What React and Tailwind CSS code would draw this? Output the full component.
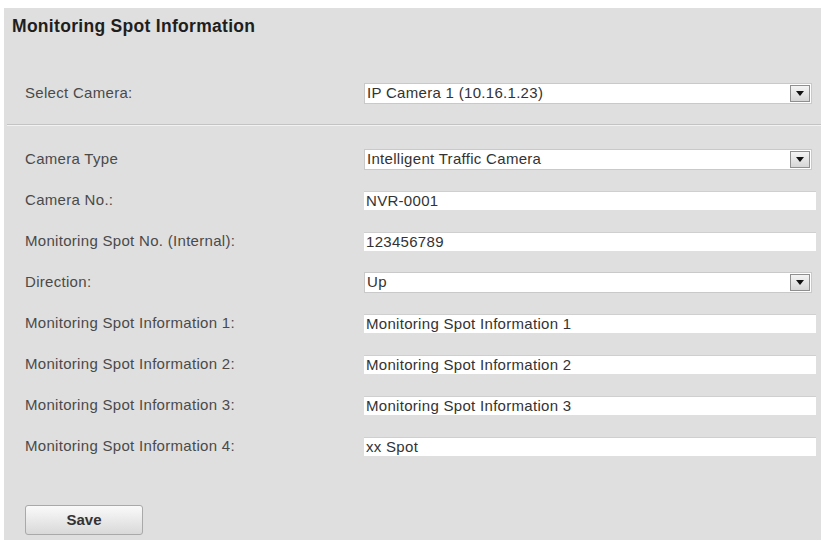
import React from "react";

const font = { fontFamily: '"Liberation Sans", Arial, sans-serif' };

function Select({ value }) {
  return (
    <div className="flex h-[21px] w-[448px] items-stretch border border-[#c9c9c9] bg-white">
      <div className="flex flex-1 items-center pl-[2px] text-[15px] tracking-[0.3px] text-[#333]">{value}</div>
      <div className="m-[1px] flex w-[20px] items-center justify-center border border-[#8f8f8f] bg-gradient-to-b from-[#f4f4f4] to-[#d6d6d6]">
        <svg width="8" height="5" viewBox="0 0 8 5"><path d="M0 0 H8 L4 5 Z" fill="#111" /></svg>
      </div>
    </div>
  );
}

function Input({ value }) {
  return (
    <div className="flex h-[19px] w-[452px] items-center border-t border-[#cfcfcf] bg-white pl-[2px] text-[15px] tracking-[0.3px] text-[#333]">
      {value}
    </div>
  );
}

function Row({ label, children }) {
  return (
    <div className="flex h-[41px] items-center">
      <div className="w-[360px] shrink-0 pl-[21px] text-[15px] tracking-[0.3px] text-[#4a4a4a]">{label}</div>
      {children}
    </div>
  );
}

export default function App() {
  return (
    <div style={font} className="h-[540px] w-[821px] overflow-hidden bg-white pl-[4px] pt-[8px]">
      <div className="flex h-full flex-col bg-[#dfdfdf]">
        <div className="pl-[8px] pt-[8px] text-[17.5px] font-bold leading-[20px] tracking-[0.3px] text-[#1e1e1e]">
          Monitoring Spot Information
        </div>
        <div className="mt-[37px]">
          <Row label="Select Camera:">
            <Select value="IP Camera 1 (10.16.1.23)" />
          </Row>
        </div>
        <div className="ml-[3px] mt-[10px] h-[2px] border-t border-[#c3c3c3] border-b border-b-[#f2f2f2]" />
        <div className="mt-[13px] flex flex-col">
          <Row label="Camera Type">
            <Select value="Intelligent Traffic Camera" />
          </Row>
          <Row label="Camera No.:">
            <Input value="NVR-0001" />
          </Row>
          <Row label="Monitoring Spot No. (Internal):">
            <Input value="123456789" />
          </Row>
          <Row label="Direction:">
            <Select value="Up" />
          </Row>
          <Row label="Monitoring Spot Information 1:">
            <Input value="Monitoring Spot Information 1" />
          </Row>
          <Row label="Monitoring Spot Information 2:">
            <Input value="Monitoring Spot Information 2" />
          </Row>
          <Row label="Monitoring Spot Information 3:">
            <Input value="Monitoring Spot Information 3" />
          </Row>
          <Row label="Monitoring Spot Information 4:">
            <Input value="xx Spot" />
          </Row>
        </div>
        <div className="mt-[38px] pl-[21px]">
          <button className="h-[30px] w-[118px] rounded-[3px] border border-[#a9a9a9] bg-gradient-to-b from-[#fafafa] to-[#d9d9d9] text-[15px] font-bold text-[#333]">
            Save
          </button>
        </div>
      </div>
    </div>
  );
}
